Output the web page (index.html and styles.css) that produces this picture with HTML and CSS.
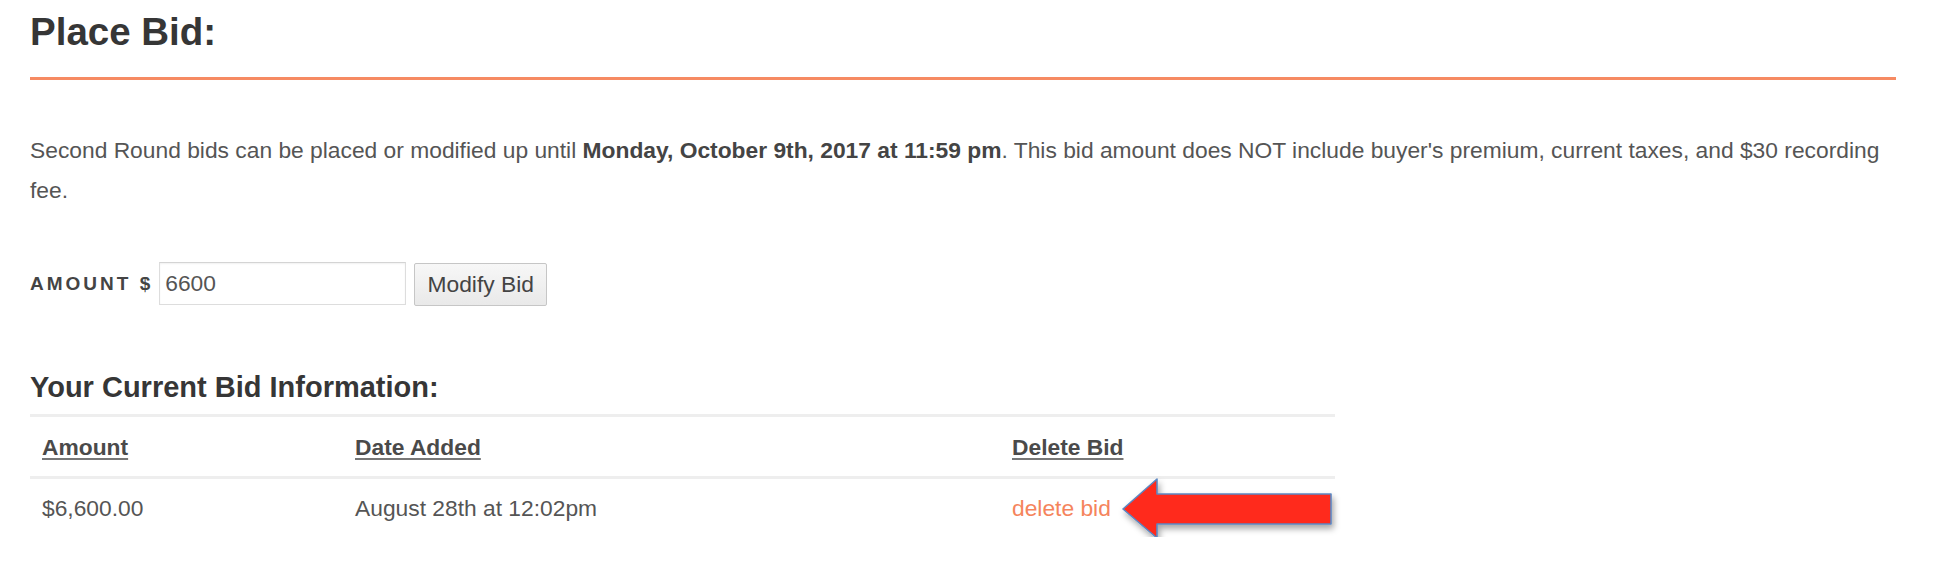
FILE: index.html
```html
<!DOCTYPE html>
<html lang="en">
<head>
<meta charset="utf-8">
<title>Place Bid</title>
<link rel="stylesheet" href="styles.css">
</head>
<body>
<main class="page">
  <h1 class="title">Place Bid:</h1>
  <p class="notice">Second Round bids can be placed or modified up until <strong>Monday, October 9th, 2017 at 11:59 pm</strong>. This bid amount does NOT include buyer's premium, current taxes, and $30 recording fee.</p>
  <form class="bid-form">
    <label class="amount-label" for="amount">AMOUNT $</label>
    <input class="amount-input" id="amount" type="text" value="6600">
    <button class="modify-btn" type="button">Modify Bid</button>
  </form>
  <h2 class="subtitle">Your Current Bid Information:</h2>
  <table class="bids">
    <colgroup>
      <col class="col-amount">
      <col class="col-date">
      <col class="col-delete">
    </colgroup>
    <thead>
      <tr>
        <th><span class="th-link">Amount</span></th>
        <th><span class="th-link">Date Added</span></th>
        <th><span class="th-link">Delete Bid</span></th>
      </tr>
    </thead>
    <tbody>
      <tr>
        <td>$6,600.00</td>
        <td>August 28th at 12:02pm</td>
        <td><a class="delete-link" href="#">delete bid</a></td>
      </tr>
    </tbody>
  </table>
  <svg class="arrow" width="232" height="84" viewBox="0 0 232 84" aria-hidden="true">
    <defs>
      <filter id="shadow" x="-10%" y="-20%" width="130%" height="160%">
        <feDropShadow dx="2" dy="4" stdDeviation="3" flood-color="#000" flood-opacity="0.35"/>
      </filter>
    </defs>
    <polygon points="8,39 42,9 42,24 216,24 216,54 42,54 42,68" fill="#ff2a1c" stroke="#5b87c2" stroke-width="1.6" stroke-linejoin="round" filter="url(#shadow)"/>
  </svg>
</main>
</body>
</html>
```

FILE: styles.css
```css
html, body {
  margin: 0;
  padding: 0;
  background: #ffffff;
}

body {
  font-family: "Liberation Sans", Arial, Helvetica, sans-serif;
  color: #555555;
}

.page {
  position: relative;
  padding: 0 46px 0 30px;
}

.title {
  margin: 0;
  padding-top: 9px;
  padding-bottom: 22px;
  font-size: 38.5px;
  line-height: 46px;
  font-weight: bold;
  color: #363636;
  border-bottom: 3px solid #f68a62;
}

.notice {
  margin: 50px 0 0;
  font-size: 22.8px;
  line-height: 40px;
  color: #555555;
}

.notice strong {
  color: #444444;
}

.bid-form {
  display: flex;
  align-items: center;
  margin-top: 52px;
  height: 43px;
}

.amount-label {
  font-size: 19px;
  font-weight: bold;
  letter-spacing: 3px;
  line-height: 43px;
  color: #444444;
  margin-right: 6px;
}

.amount-input {
  box-sizing: border-box;
  width: 247px;
  height: 43px;
  margin: 0;
  padding: 0 5px;
  border: 1px solid #dddddd;
  border-top-color: #d4d4d4;
  box-shadow: inset 0 1px 2px rgba(0, 0, 0, 0.06);
  font-family: "Liberation Sans", Arial, Helvetica, sans-serif;
  font-size: 22.8px;
  color: #555555;
  background: #ffffff;
  outline: none;
}

.modify-btn {
  box-sizing: border-box;
  width: 133px;
  height: 43px;
  margin: 1px 0 0 8px;
  padding: 0;
  border: 1px solid #c6c6c6;
  border-radius: 2px;
  background: linear-gradient(#f7f7f7, #e9e9e9);
  font-family: "Liberation Sans", Arial, Helvetica, sans-serif;
  font-size: 22.8px;
  color: #444444;
}

.subtitle {
  margin: 64px 0 0;
  font-size: 29px;
  line-height: 36px;
  font-weight: bold;
  color: #363636;
}

.bids {
  margin-top: 9px;
  width: 1305px;
  border-collapse: collapse;
  table-layout: fixed;
}

.col-amount { width: 313px; }
.col-date { width: 657px; }
.col-delete { width: 335px; }

.bids th,
.bids td {
  text-align: left;
  padding: 17px 12px 16px;
  font-size: 22.8px;
  line-height: 26px;
  white-space: nowrap;
}

.bids th {
  font-weight: bold;
  color: #4a4a4a;
  border-top: 3px solid #eeeeee;
  border-bottom: 3px solid #eeeeee;
}

.th-link {
  text-decoration: underline;
  text-decoration-thickness: 2px;
  text-underline-offset: 3px;
  text-decoration-color: #777777;
}

.bids td {
  padding-top: 16px;
  color: #555555;
}

.delete-link {
  color: #f5845c;
  text-decoration: none;
}

.arrow {
  position: absolute;
  left: 1115px;
  top: 470px;
}
```
